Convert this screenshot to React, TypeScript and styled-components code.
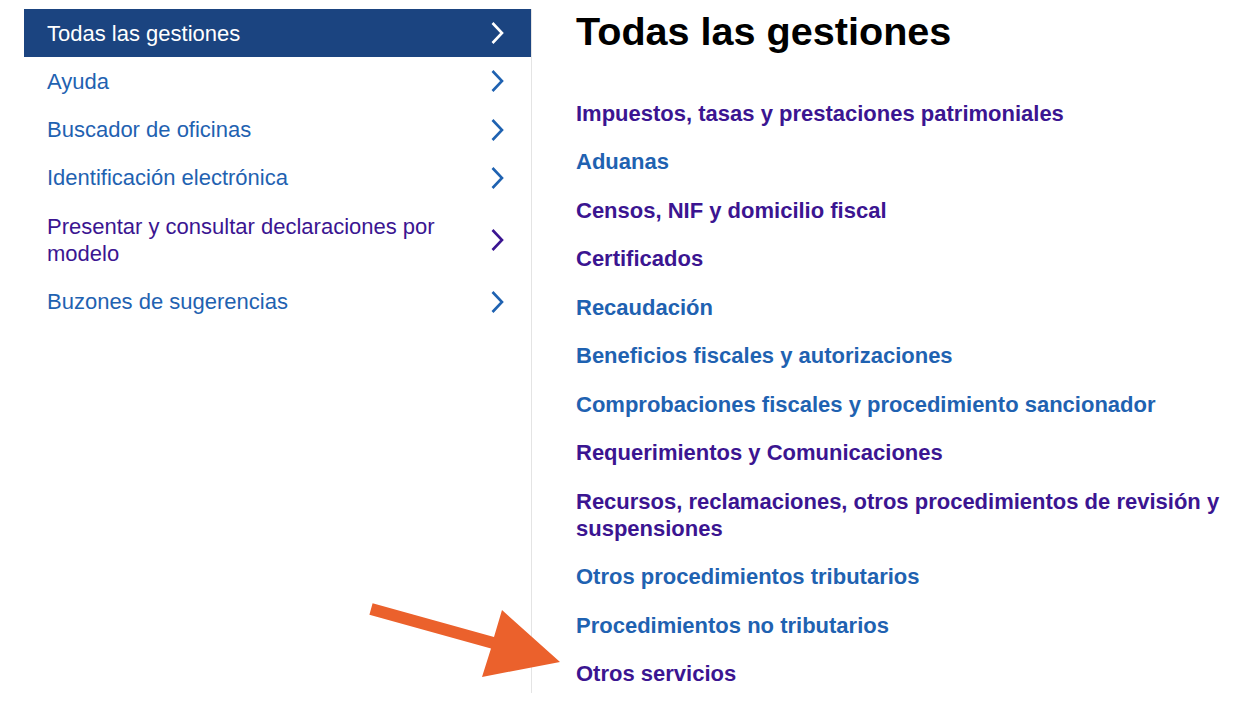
import * as React from "react"
import styled, { createGlobalStyle } from "styled-components"

const GlobalStyle = createGlobalStyle`
  html, body {
    margin: 0;
    padding: 0;
    background: #fff;
  }
  body {
    font-family: "Liberation Sans", Arial, sans-serif;
  }
`

const Page = styled.div`
  position: relative;
  display: flex;
  align-items: stretch;
  padding-top: 9px;
  width: 1254px;
  min-height: 722px;
  box-sizing: border-box;
`

const Sidebar = styled.nav`
  width: 508px;
  margin-left: 24px;
  border-right: 1px solid #e4e4e4;
  box-sizing: border-box;
  align-self: flex-start;
  height: 684px;
`

const NavList = styled.ul`
  list-style: none;
  margin: 0;
  padding: 0;
`

const NavItem = styled.li<{ $active?: boolean; $visited?: boolean }>`
  display: flex;
  align-items: center;
  justify-content: space-between;
  padding: 10.65px 27px 10.65px 23px;
  font-size: 22px;
  line-height: 27px;
  background: ${({ $active }) => ($active ? "#1b4480" : "transparent")};
  color: ${({ $active, $visited }) =>
    $active ? "#ffffff" : $visited ? "#3b1591" : "#1f62b1"};
`

const NavLabel = styled.span`
  flex: 1;
  padding-right: 40px;
`

const Chevron = styled.svg`
  flex: 0 0 auto;
  width: 14px;
  height: 24px;
`

const Main = styled.main`
  flex: 1;
  padding-left: 44px;
`

const Title = styled.h1`
  margin: 0;
  font-size: 39.6px;
  line-height: 45px;
  font-weight: bold;
  color: #000;
`

const LinkList = styled.ul`
  list-style: none;
  margin: 45.9px 0 0;
  padding: 0;
  display: flex;
  flex-direction: column;
  gap: 21.5px;
`

const LinkItem = styled.li<{ $visited?: boolean }>`
  font-size: 22px;
  line-height: 27px;
  font-weight: bold;
  color: ${({ $visited }) => ($visited ? "#3b1591" : "#1f62b1")};
  padding-right: 20px;
`

const Arrow = styled.svg`
  position: absolute;
  left: 0;
  top: 0;
  width: 1254px;
  height: 722px;
  pointer-events: none;
`

const navItems = [
  { label: "Todas las gestiones", active: true },
  { label: "Ayuda" },
  { label: "Buscador de oficinas" },
  { label: "Identificación electrónica" },
  { label: "Presentar y consultar declaraciones por modelo", visited: true },
  { label: "Buzones de sugerencias" },
]

const links = [
  { label: "Impuestos, tasas y prestaciones patrimoniales", visited: true },
  { label: "Aduanas" },
  { label: "Censos, NIF y domicilio fiscal", visited: true },
  { label: "Certificados", visited: true },
  { label: "Recaudación" },
  { label: "Beneficios fiscales y autorizaciones" },
  { label: "Comprobaciones fiscales y procedimiento sancionador" },
  { label: "Requerimientos y Comunicaciones", visited: true },
  {
    label:
      "Recursos, reclamaciones, otros procedimientos de revisión y suspensiones",
    visited: true,
  },
  { label: "Otros procedimientos tributarios" },
  { label: "Procedimientos no tributarios" },
  { label: "Otros servicios", visited: true },
]

const App = () => (
  <>
    <GlobalStyle />
    <Page>
      <Sidebar>
        <NavList>
          {navItems.map((item) => (
            <NavItem
              key={item.label}
              $active={item.active}
              $visited={item.visited}
            >
              <NavLabel>{item.label}</NavLabel>
              <Chevron viewBox="0 0 14 24">
                <polyline
                  points="2.5,2 12,12 2.5,22"
                  fill="none"
                  stroke="currentColor"
                  strokeWidth="2.6"
                />
              </Chevron>
            </NavItem>
          ))}
        </NavList>
      </Sidebar>
      <Main>
        <Title>Todas las gestiones</Title>
        <LinkList>
          {links.map((l) => (
            <LinkItem key={l.label} $visited={l.visited}>
              {l.label}
            </LinkItem>
          ))}
        </LinkList>
      </Main>
      <Arrow viewBox="0 0 1254 722">
        <polygon
          points="372.6,603.2 494,637 502,610 560,662 482,677 491,648.5 369.4,614.8"
          fill="#eb612c"
        />
      </Arrow>
    </Page>
  </>
)

export default App
